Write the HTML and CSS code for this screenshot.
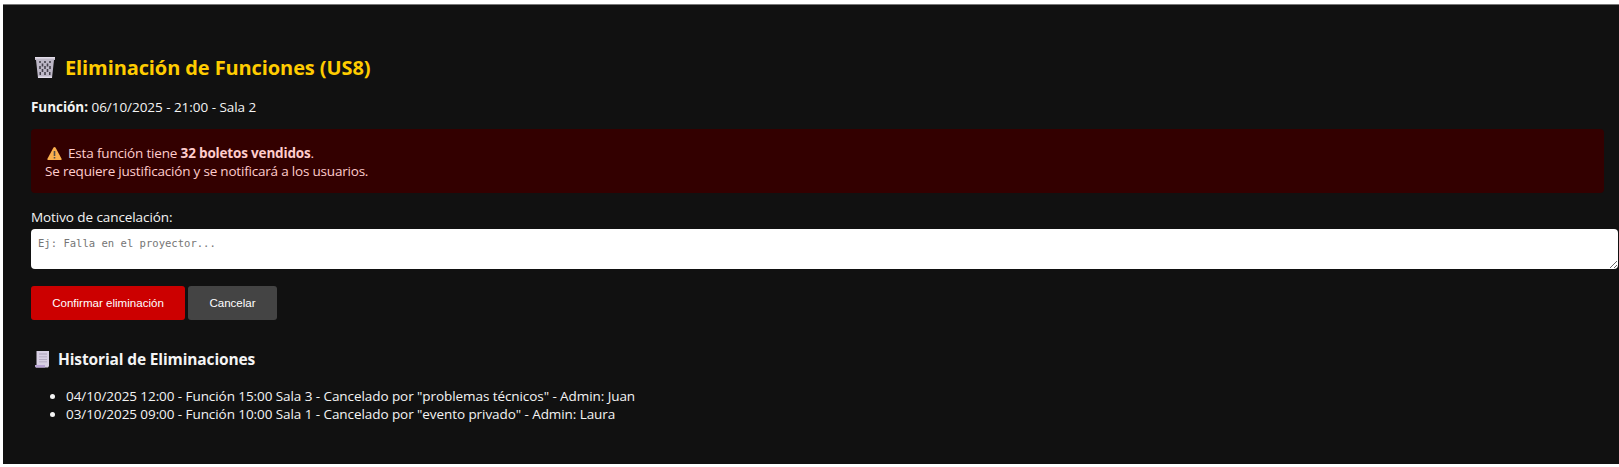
FILE: index.html
```html
<!DOCTYPE html>
<html lang="es">
<head>
<meta charset="utf-8">
<title>Eliminación de Funciones</title>
<link rel="stylesheet" href="styles.css">
</head>
<body>
<main class="panel">
  <h2 class="title">
    <svg class="icon-bin" viewBox="0 0 22 22" aria-hidden="true">
      <path fill="#bdb7c6" d="M1 0h20v3h-1l-2 18H4L2 3H1z"/>
      <path fill="#e3ddea" d="M1 0h20v1.5H1zM4 19.5h14V21H4z"/>
      <path fill="#45414c" d="M5.200 4h1.600v2H5.200zm5 0h1.600v2h-1.600zm5 0h1.600v2h-1.600zM7.700 6.500h1.600v3H7.700zm5 0h1.600v3h-1.600zM5.200 9h1.600v3H5.200zm5 0h1.600v3h-1.600zm5 0h1.600v3h-1.600zM7.700 12h1.600v3H7.700zm5 0h1.600v3h-1.600zM5.500 15H7v3H5.500zm4.700 0h1.600v3h-1.600zm4.800 0h1.500v3H15z"/>
    </svg>
    <span class="title-text">Eliminación de Funciones (US8)</span>
  </h2>
  <p class="show"><strong>Función:</strong> 06/10/2025 - 21:00 - Sala 2</p>
  <div class="warning">
    <div class="warning-line">
      <svg class="icon-warn" viewBox="0 0 15 13" aria-hidden="true">
        <path fill="#fbb04e" d="M6.500.5Q7.500-.5 8.500.5L14.700 12Q14.700 13 14 13H1Q.3 13 .3 12z"/>
        <path fill="#55504d" d="M6.700 4h1.600v5H6.700zm0 6h1.600v1.600H6.700z"/>
      </svg>
      <span class="warning-lead">Esta función tiene <strong>32 boletos vendidos</strong>.</span>
    </div>
    <div class="warning-line"><span class="warning-note">Se requiere justificación y se notificará a los usuarios.</span></div>
  </div>
  <label class="label" for="reason">Motivo de cancelación:</label>
  <textarea class="reason" id="reason" placeholder="Ej: Falla en el proyector..."></textarea>
  <div class="actions">
    <button class="button confirm" type="button">Confirmar eliminación</button>
    <button class="button cancel" type="button">Cancelar</button>
  </div>
  <h3 class="subtitle">
    <svg class="icon-scroll" viewBox="0 0 14 17" aria-hidden="true">
      <path fill="#d8d0e4" d="M1.500 0H14v15l-1 1.500H1Q0 16 0 14h1.500z"/>
      <path fill="#aaa0b8" d="M4 2.500h8v1H4zm0 3h8v.7H4zm0 2.500h8v.7H4zm0 2.500h8v.7H4z"/>
      <path fill="#b9a4d4" d="M0 14h10v2.500H1Q0 16 0 14z"/>
    </svg>
    <span class="subtitle-text">Historial de Eliminaciones</span>
  </h3>
  <ul class="history">
    <li>04/10/2025 12:00 - Función 15:00 Sala 3 - Cancelado por "problemas técnicos" - Admin: Juan</li>
    <li>03/10/2025 09:00 - Función 10:00 Sala 1 - Cancelado por "evento privado" - Admin: Laura</li>
  </ul>
</main>
</body>
</html>
```
FILE: styles.css
```css
body {
  margin: 0;
  padding: 4px 0 0 3px;
  background: #fff;
  overflow: hidden;
  font: 13.500px/18px "Open Sans", "Noto Sans", sans-serif;
}
.panel {
  box-sizing: border-box;
  height: 460px;
  padding: 49px 15px 0 28px;
  border-top: 1px solid #777;
  background: #111;
  color: #f4f4f4;
}
.title {
  display: flex;
  align-items: center;
  gap: 9px;
  margin: 0;
  padding-left: 3px;
  height: 28px;
  color: #fc0;
  font-size: 20px;
  line-height: 28px;
  letter-spacing: -0.1px;
}
.icon-bin { width: 22px; height: 22px; }
.show { margin: 16px 0 0; line-height: 18px; letter-spacing: -0.04px; }
.warning {
  margin-top: 13px;
  height: 64px;
  box-sizing: border-box;
  padding: 15px 14px 0;
  border-radius: 4px;
  background: #300;
  color: #fcc;
}
.warning-line { display: flex; align-items: center; height: 18px; }
.warning-lead { letter-spacing: -0.17px; }
.warning-note { letter-spacing: -0.2px; }
.icon-warn { width: 15px; height: 13px; margin: 0 6px 0 2px; }
.label { display: block; margin-top: 15px; letter-spacing: -0.08px; }
.reason {
  display: block;
  box-sizing: border-box;
  width: calc(100% + 14px);
  height: 40px;
  margin: 3px 0 0;
  padding: 7px;
  border: 0;
  border-radius: 4px;
  background: #fff;
  font: 10.550px/14px "DejaVu Sans Mono", monospace;
  resize: vertical;
  overflow: hidden;
}
.reason::placeholder { color: #757575; }
.actions { display: flex; gap: 3px; margin-top: 17px; }
.button {
  height: 34px;
  padding: 0;
  border: 0;
  border-radius: 3px;
  color: #fff;
  font: 11.550px "Liberation Sans", Arial, sans-serif;
}
.confirm { width: 154px; background: #c00; }
.cancel { width: 89px; background: #444; }
.subtitle {
  display: flex;
  align-items: center;
  gap: 9px;
  margin: 28px 0 0;
  padding-left: 4px;
  height: 22px;
  font-size: 15.500px;
  letter-spacing: -0.13px;
}
.icon-scroll { width: 14px; height: 17px; }
.history { margin: 17px 0 0; padding-left: 35px; letter-spacing: -0.073px; }
.history li { height: 18px; }
```
